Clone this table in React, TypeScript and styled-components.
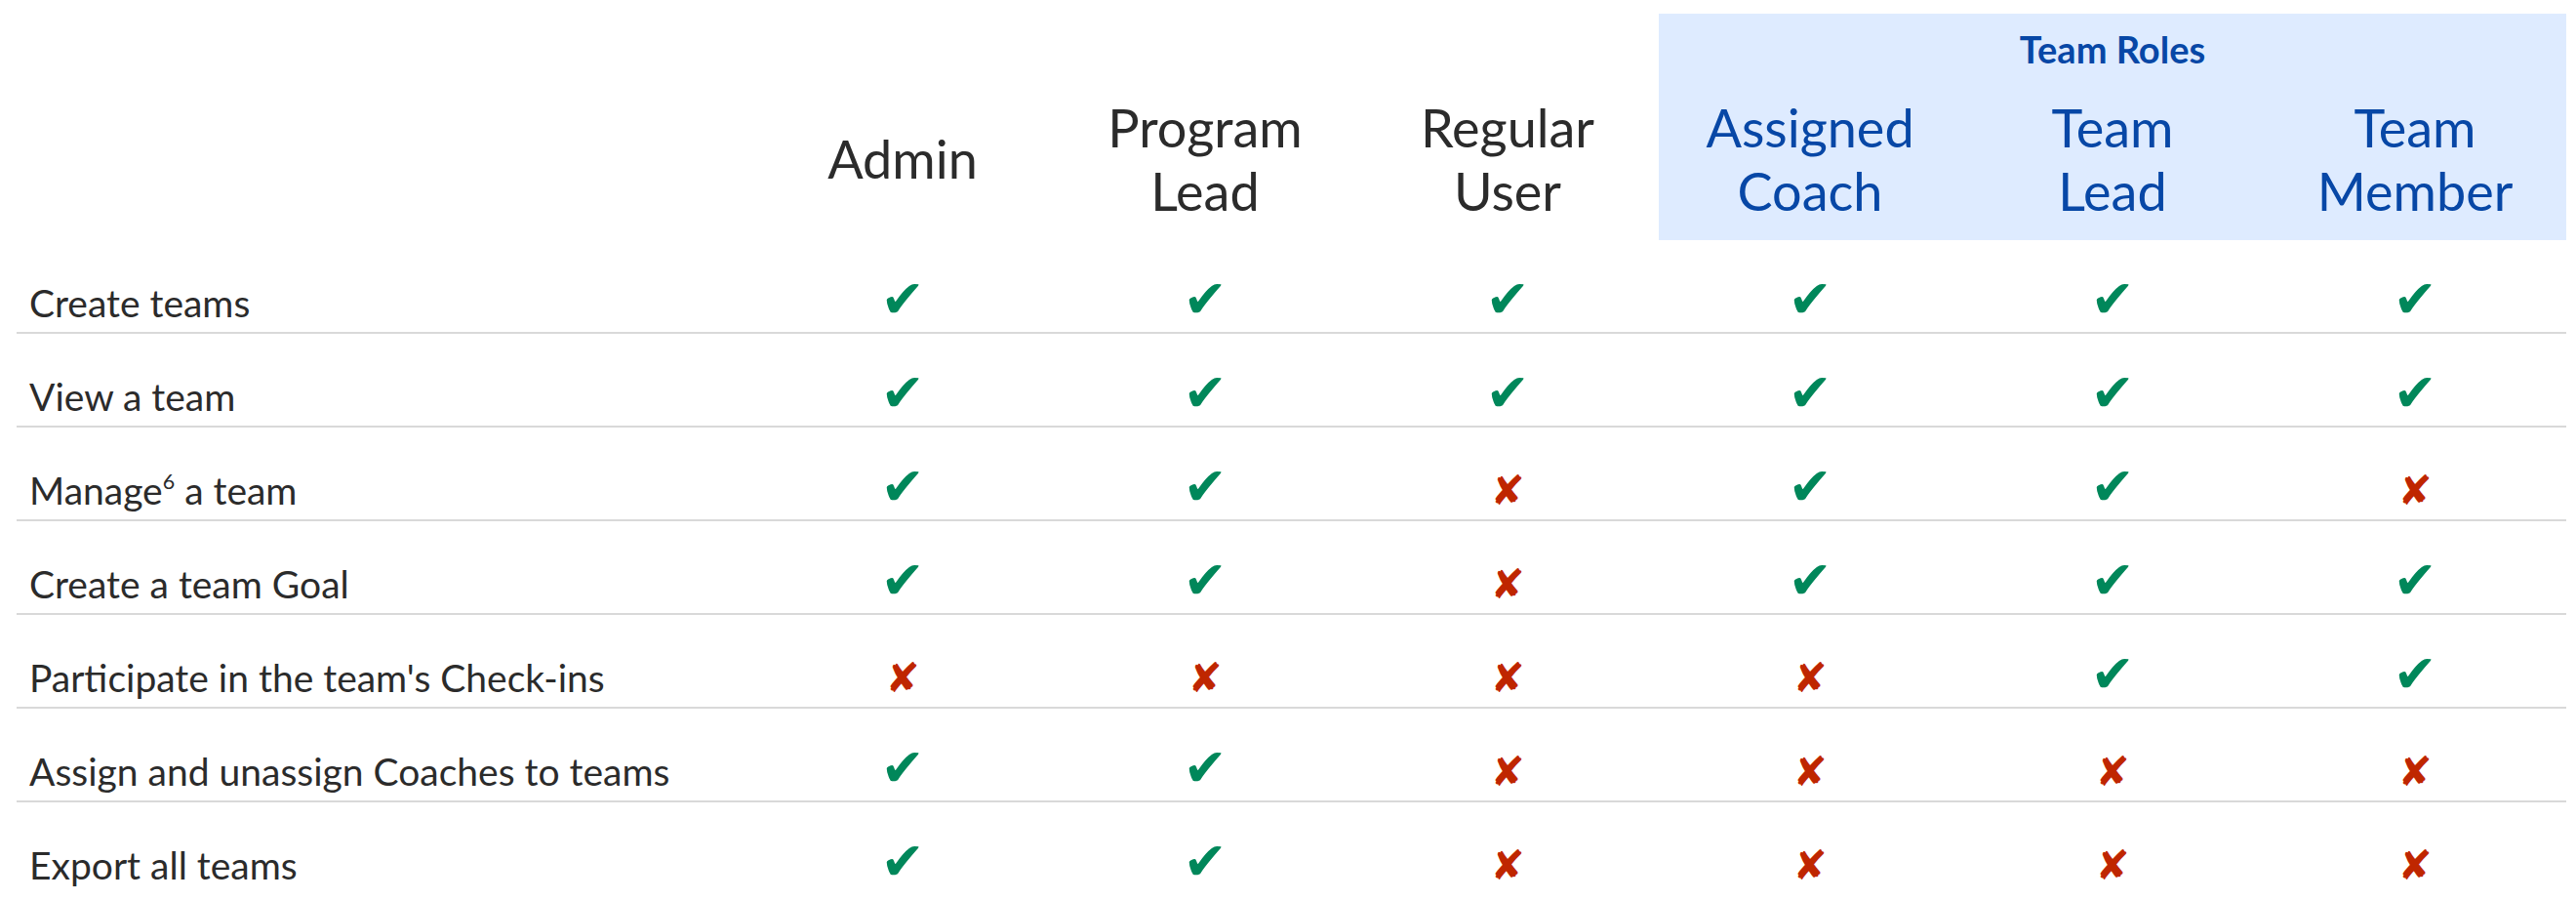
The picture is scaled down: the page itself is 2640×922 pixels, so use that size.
import React from "react";
import styled, { createGlobalStyle } from "styled-components";

const GlobalStyle = createGlobalStyle`
  html, body {
    margin: 0;
    padding: 0;
    background: #ffffff;
  }
  body {
    font-family: Lato, "Open Sans", "Liberation Sans", sans-serif;
    color: #2b2b2b;
  }
`;

const COLS = "753px repeat(6, 310px)";

const Page = styled.div`
  padding: 14px 10px 0 17px;
`;

const Table = styled.div`
  width: 2613px;
  display: flex;
  flex-direction: column;
`;

const HeaderGrid = styled.div`
  display: grid;
  grid-template-columns: ${COLS};
  grid-template-rows: 69px 163px;
`;

const GroupTitle = styled.div`
  grid-column: 5 / span 3;
  grid-row: 1;
  background: #deebff;
  color: #0747a6;
  font-weight: 700;
  font-size: 38px;
  line-height: 44px;
  display: flex;
  align-items: flex-end;
  justify-content: center;
  padding-bottom: 11px;
`;

const HeaderCell = styled.div<{ $role?: boolean; $col: number }>`
  grid-row: 2;
  grid-column: ${(p) => p.$col};
  background: ${(p) => (p.$role ? "#deebff" : "transparent")};
  color: ${(p) => (p.$role ? "#0747a6" : "#2b2b2b")};
  font-size: 54px;
  line-height: 65px;
  text-align: center;
  display: flex;
  align-items: center;
  justify-content: center;
  padding-bottom: 4px;
`;

const Row = styled.div<{ $last?: boolean }>`
  display: grid;
  grid-template-columns: ${COLS};
  height: 96px;
  box-sizing: border-box;
  align-items: baseline;
  padding-top: 37px;
  border-bottom: ${(p) => (p.$last ? "none" : "2px solid #d9d9d9")};
`;

const Label = styled.div`
  font-size: 39px;
  line-height: 47px;
  padding-left: 13px;
  white-space: nowrap;
`;

const Sup = styled.sup`
  font-size: 0.55em;
  line-height: 0;
  vertical-align: 0.75em;
`;

const Mark = styled.div<{ $ok: boolean }>`
  font-family: "DejaVu Sans", sans-serif;
  font-size: ${(p) => (p.$ok ? "54px" : "42px")};
  line-height: 47px;
  text-align: center;
  color: ${(p) => (p.$ok ? "#00875a" : "#bf2600")};
`;

type Perm = {
  label: React.ReactNode;
  values: boolean[];
};

const T = true;
const F = false;

const rows: Perm[] = [
  { label: "Create teams", values: [T, T, T, T, T, T] },
  { label: "View a team", values: [T, T, T, T, T, T] },
  {
    label: (
      <>
        Manage<Sup>6</Sup> a team
      </>
    ),
    values: [T, T, F, T, T, F],
  },
  { label: "Create a team Goal", values: [T, T, F, T, T, T] },
  { label: "Participate in the team's Check-ins", values: [F, F, F, F, T, T] },
  { label: "Assign and unassign Coaches to teams", values: [T, T, F, F, F, F] },
  { label: "Export all teams", values: [T, T, F, F, F, F] },
];

const headers: { lines: string[]; role: boolean }[] = [
  { lines: ["Admin"], role: false },
  { lines: ["Program", "Lead"], role: false },
  { lines: ["Regular", "User"], role: false },
  { lines: ["Assigned", "Coach"], role: true },
  { lines: ["Team", "Lead"], role: true },
  { lines: ["Team", "Member"], role: true },
];

export default function App() {
  return (
    <>
      <GlobalStyle />
      <Page>
        <Table>
          <HeaderGrid>
            <GroupTitle>Team Roles</GroupTitle>
            {headers.map((h, i) => (
              <HeaderCell key={i} $col={i + 2} $role={h.role}>
                <div>
                  {h.lines.map((l, j) => (
                    <React.Fragment key={j}>
                      {j > 0 && <br />}
                      {l}
                    </React.Fragment>
                  ))}
                </div>
              </HeaderCell>
            ))}
          </HeaderGrid>
          {rows.map((r, i) => (
            <Row key={i} $last={i === rows.length - 1}>
              <Label>{r.label}</Label>
              {r.values.map((v, j) => (
                <Mark key={j} $ok={v}>
                  {v ? "\u2714" : "\u2718"}
                </Mark>
              ))}
            </Row>
          ))}
        </Table>
      </Page>
    </>
  );
}
